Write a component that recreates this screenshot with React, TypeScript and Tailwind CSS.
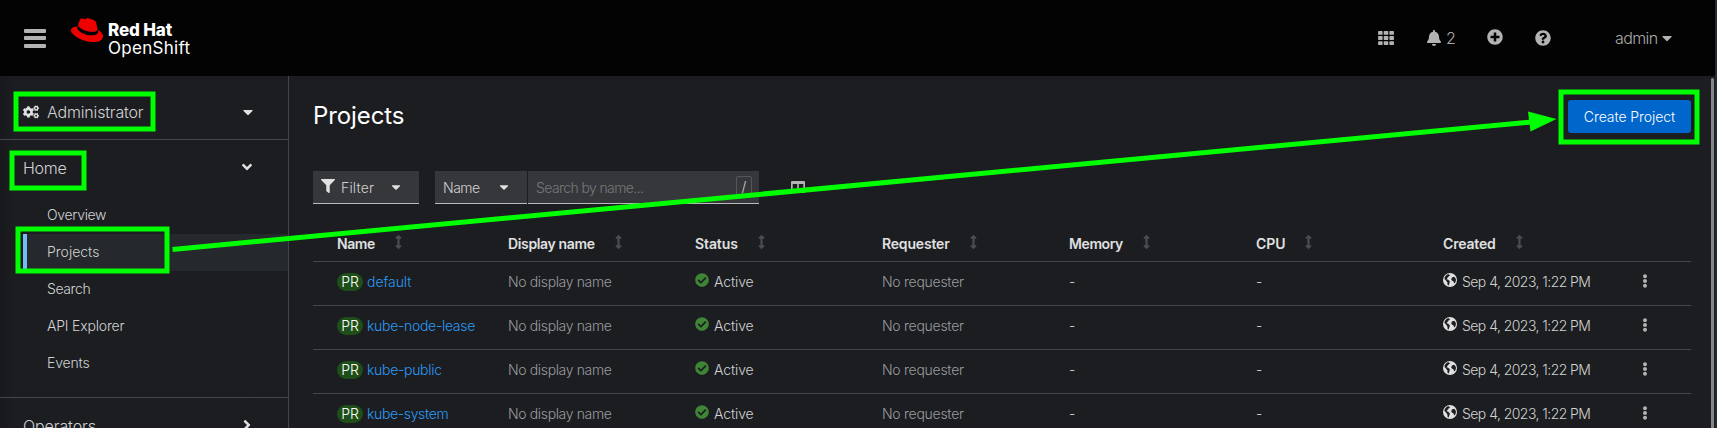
import type { ReactNode } from "react";
import {
  FaCaretDown,
  FaCogs,
  FaFilter,
  FaBell,
  FaPlusCircle,
  FaQuestionCircle,
  FaAngleDown,
  FaAngleRight,
  FaArrowsAltV,
  FaCheckCircle,
  FaEllipsisV,
  FaRedhat,
} from "react-icons/fa";

const navItems = [
  { label: "Overview", tracking: "tracking-[-0.33px]" },
  { label: "Projects", tracking: "tracking-[0px]" },
  { label: "Search", tracking: "tracking-[-0.4px]" },
  { label: "API Explorer", tracking: "tracking-[-0.18px]" },
  { label: "Events", tracking: "tracking-[-0.15px]" },
];

const columns = [
  { label: "Name", tracking: "tracking-[-0.4px]" },
  { label: "Display name", tracking: "tracking-[-0.36px]" },
  { label: "Status", tracking: "tracking-[-0.1px]" },
  { label: "Requester", tracking: "tracking-[-0.18px]" },
  { label: "Memory", tracking: "tracking-[-0.4px]" },
  { label: "CPU", tracking: "tracking-[-0.1px]" },
  { label: "Created", tracking: "tracking-[-0.18px]" },
];

const projects = [
  { name: "default", tracking: "tracking-[-0.05px]" },
  { name: "kube-node-lease", tracking: "tracking-[-0.3px]" },
  { name: "kube-public", tracking: "tracking-[-0.3px]" },
  { name: "kube-system", tracking: "tracking-[-0.35px]" },
];

const GRID = "grid grid-cols-[195px_187px_187px_187px_187px_187px_176px_1fr]";

function GlobeIcon() {
  return (
    <svg width="14" height="14" viewBox="0 0 14 14" className="shrink-0">
      <circle cx="7" cy="7" r="7" fill="#e0e0e0" />
      <path d="M1.6 4.2 4 1.6l2-.4 1 1.2-1.4 1.2L4.4 5l-.8 1.2 1.6.6 1.6 1.4-.2 1.6-1 2.6-1-.4-.2-2.6-1.2-1.6L1.6 6zM9 4.4l2-.6 1.4 1.2.6 2-.6 2.2-1.2 1.2-.8-2.2-1.6-.6-.6-1.6z" fill="#1b1d21" />
    </svg>
  );
}

function GridIcon() {
  const cells: ReactNode[] = [];
  for (let r = 0; r < 3; r++)
    for (let c = 0; c < 3; c++)
      cells.push(<rect key={`${r}-${c}`} x={c * 5.7} y={r * 5.1} width="4.6" height="3.9" rx="0.7" />);
  return (
    <svg width="16" height="14" viewBox="0 0 16 14.1" fill="#b3b3b3">
      {cells}
    </svg>
  );
}

function Header() {
  return (
    <header className="flex h-[76px] shrink-0 items-center bg-[#030303] text-[#aaaaaa]">
      <div className="ml-[24px] flex w-[22px] flex-col gap-[3.5px]">
        <span className="h-[4px] rounded-[1px] bg-[#b3b3b3]" />
        <span className="h-[4px] rounded-[1px] bg-[#b3b3b3]" />
        <span className="h-[4px] rounded-[1px] bg-[#b3b3b3]" />
      </div>
      <FaRedhat className="mb-[16px] ml-[25px] h-[32px] w-[32px] text-[#ee0000]" />
      <div className="ml-[5px] flex flex-col pt-[2px] text-[17px] leading-[18px] text-white">
        <span className="font-extrabold tracking-[-0.15px]">Red Hat</span>
        <span className="tracking-[0.3px]">OpenShift</span>
      </div>
      <div className="ml-auto flex items-center pr-[43px]">
        <GridIcon />
        <div className="ml-[33px] flex items-center gap-[5px]">
          <FaBell className="h-[16px] w-[14px] text-[#b3b3b3]" />
          <span className="w-[9px] text-[16px] font-light">2</span>
        </div>
        <FaPlusCircle className="mb-[2px] ml-[32px] h-4 w-4 text-[#b3b3b3]" />
        <FaQuestionCircle className="ml-[32px] h-4 w-4 text-[#b3b3b3]" />
        <span className="ml-[64px] w-[43px] text-[16px] font-light tracking-[-0.6px]">admin</span>
        <FaCaretDown className="ml-[4px] h-4 w-[10px] text-[#b3b3b3]" />
      </div>
    </header>
  );
}

function Sidebar() {
  return (
    <aside className="flex w-[289px] shrink-0 flex-col overflow-hidden border-r border-[#444548] bg-[#1b1d21] bg-gradient-to-r from-[#17191c] to-[#1b1d21] to-[5%] text-[#d2d2d2]">
      <div className="flex h-[64px] shrink-0 items-center border-b border-[#444548] pl-[23px] pt-[9px]">
        <FaCogs className="h-[16px] w-[16px] text-[#e0e0e0]" />
        <span className="ml-[8px] text-[16px] font-light tracking-[-0.17px]">Administrator</span>
        <FaCaretDown className="ml-auto mr-[35px] h-4 w-[10px] text-[#e0e0e0]" />
      </div>
      <div className="flex h-[57px] shrink-0 items-center pl-[23px]">
        <span className="mb-[2px] text-[16px] font-light tracking-[-0.3px]">Home</span>
        <FaAngleDown className="mb-[4px] ml-auto mr-[34px] h-4 w-[14px] text-[#e0e0e0]" />
      </div>
      <nav className="flex shrink-0 flex-col">
        {navItems.map((item) => (
          <div key={item.label} className="flex h-[37px] items-center pl-[23px]">
            <div
              className={
                item.label === "Projects"
                  ? "flex h-full flex-1 items-center border-l-4 border-[#73bcf7] bg-[#25282d] pl-5"
                  : "flex h-full flex-1 items-center border-l-4 border-transparent pl-5"
              }
            >
              <span className={"mb-[2px] text-[14px] font-light " + item.tracking}>{item.label}</span>
            </div>
          </div>
        ))}
      </nav>
      <div className="mt-[15px] flex h-[58px] shrink-0 items-center border-t border-[#444548] pl-[23px]">
        <span className="mb-[2px] text-[16px] font-light tracking-[-0.1px]">Operators</span>
        <FaAngleRight className="mb-[4px] ml-auto mr-[34px] h-4 w-[14px] text-[#e0e0e0]" />
      </div>
    </aside>
  );
}

function Toolbar() {
  return (
    <div className="flex h-[33px] shrink-0 items-stretch text-[14px] font-light text-[#d2d2d2]">
      <div className="flex w-[106px] items-center border-b border-[#b8bbbe] bg-[#36373a] pl-[8px]">
        <FaFilter className="mb-[3px] h-[14px] w-[14px] text-[#e0e0e0]" />
        <span className="ml-[6px] tracking-[0.15px]">Filter</span>
        <FaCaretDown className="ml-auto mr-[18px] h-[14px] w-[10px] text-[#e0e0e0]" />
      </div>
      <div className="ml-4 flex w-[92px] items-center border-b border-[#b8bbbe] bg-[#36373a] pl-[8px]">
        <span className="tracking-[-0.5px]">Name</span>
        <FaCaretDown className="ml-auto mr-[18px] h-[14px] w-[10px] text-[#e0e0e0]" />
      </div>
      <div className="ml-px flex w-[231px] items-center justify-between border-b border-[#b8bbbe] bg-[#36373a] pl-[8px] pr-[7px]">
        <span className="tracking-[-0.6px] text-[#76787b]">Search by name...</span>
        <span className="mb-[2px] flex h-[21px] w-4 items-center justify-center rounded-[2px] border border-[#55575b]">/</span>
      </div>
      <svg width="14" height="12" viewBox="0 0 14 12" className="ml-[32px] mt-[10px]">
        <path fillRule="evenodd" fill="#b3b3b3" d="M1 0h12a1 1 0 0 1 1 1v10a1 1 0 0 1-1 1H1a1 1 0 0 1-1-1V1a1 1 0 0 1 1-1zM1.700 3v7.300h4.500V3zM7.800 3v7.300h4.500V3z" />
      </svg>
    </div>
  );
}

function ProjectTable() {
  return (
    <div className="mt-[22px] flex shrink-0 flex-col text-[14px] font-light text-[#d2d2d2]">
      <div className={GRID + " h-[36px] border-b border-[#444548]"}>
        {columns.map((col, i) => (
          <div
            key={col.label}
            className={"flex h-[34px] items-center gap-[20px] font-semibold text-[#e0e0e0] " + (i === 0 ? "pl-6" : "")}
          >
            <span className={col.tracking}>{col.label}</span>
            <FaArrowsAltV className="mb-[2px] h-[14px] w-[7px] text-[#4a4c50]" />
          </div>
        ))}
        <div />
      </div>
      {projects.map((project) => (
        <div key={project.name} className={GRID + " h-[44px] shrink-0 items-center border-b border-[#444548] pb-1"}>
          <div className="flex items-center gap-[4px] pl-6">
            <span className="flex h-[18px] w-[26px] items-center justify-center rounded-full bg-[#1e4f18] text-[14px] font-light text-white">
              PR
            </span>
            <span className={"text-[#2b9af3] " + project.tracking}>{project.name}</span>
          </div>
          <span className="tracking-[-0.36px] text-[#9a9b9d]">No display name</span>
          <div className="flex items-center gap-[5px]">
            <FaCheckCircle className="mb-[3px] h-[14px] w-[14px] text-[#3e8635]" />
            <span className="tracking-[-0.12px]">Active</span>
          </div>
          <span className="tracking-[-0.27px] text-[#9a9b9d]">No requester</span>
          <span>-</span>
          <span>-</span>
          <div className="flex items-center gap-[5px] whitespace-nowrap">
            <div className="mb-[4px]">
              <GlobeIcon />
            </div>
            <span className="tracking-[-0.55px]">Sep 4, 2023, 1:22 PM</span>
          </div>
          <FaEllipsisV className="mb-[2px] ml-[23px] h-[14px] w-[6px] text-[#b3b3b3]" />
        </div>
      ))}
    </div>
  );
}

function Annotations() {
  return (
    <svg width="1717" height="428" viewBox="0 0 1717 428" className="absolute left-0 top-0" fill="none" stroke="#00ff00" strokeWidth="5">
      <rect x="16" y="94" width="137" height="35" />
      <rect x="12" y="153" width="72" height="35" />
      <rect x="18" y="229" width="149" height="42" />
      <rect x="1561" y="92" width="136" height="50" />
      <path d="M172.500 249.400 1531 122" />
      <path d="M1528 111.500 1556.500 119 1530.500 131.500z" fill="#00ff00" stroke="none" />
    </svg>
  );
}

export default function App() {
  return (
    <div className="relative flex h-[428px] w-[1717px] overflow-hidden bg-[#1b1d21] font-['Inter','Liberation_Sans',sans-serif]">
      <div className="flex min-w-0 flex-1 flex-col">
        <Header />
        <div className="flex min-h-0 flex-1">
          <Sidebar />
          <main className="flex min-w-0 flex-1 flex-col overflow-hidden pl-[24px] pr-[20px]">
            <div className="flex h-[95px] shrink-0 items-start justify-between">
              <h1 className="mt-[21px] text-[24px] leading-[38px] tracking-[-0.1px] text-white">Projects</h1>
              <button className="mt-6 h-[33px] w-[123px] rounded-[3px] bg-[#0066cc] text-[14px] font-light tracking-[-0.07px] text-white">
                Create Project
              </button>
            </div>
            <Toolbar />
            <ProjectTable />
          </main>
          <div className="mr-[1px] mt-[2px] w-[3px] rounded-t bg-[#85868a]" />
        </div>
      </div>
      <div className="w-[2px] shrink-0 bg-[#232a33]" />
      <Annotations />
    </div>
  );
}
